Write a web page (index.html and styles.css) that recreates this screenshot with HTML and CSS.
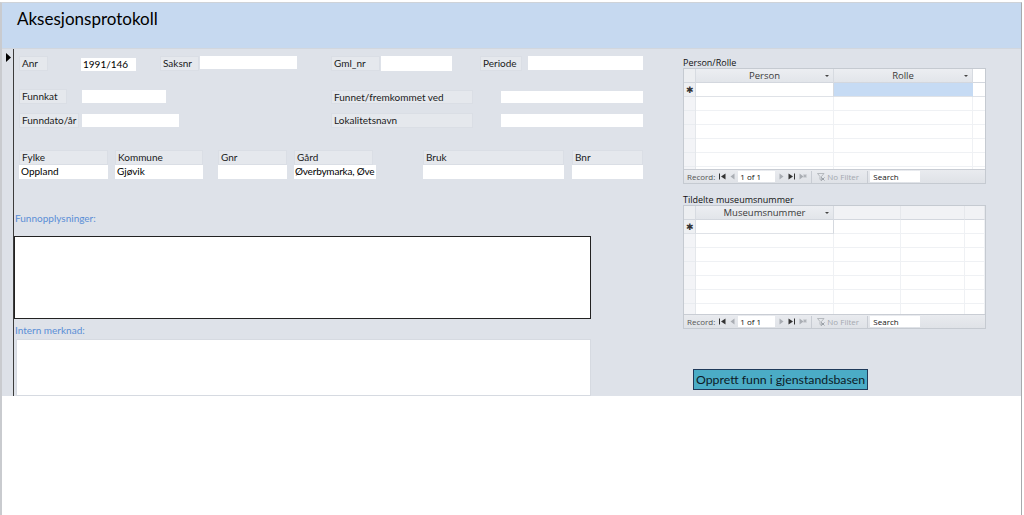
FILE: index.html
```html
<!DOCTYPE html>
<html lang="no">
<head>
<meta charset="utf-8">
<title>Aksesjonsprotokoll</title>
<link rel="stylesheet" href="styles.css">
</head>
<body>
<div class="frame">
  <header class="form-header">
    <h1 class="title">Aksesjonsprotokoll</h1>
  </header>
  <section class="detail">
    <div class="selector">
      <svg class="cur" width="5" height="9" viewBox="0 0 5 9"><path d="M0 0L5 4.5L0 9Z" fill="#000"/></svg>
    </div>
    <div class="left">
      <div class="row r1">
        <span class="lbl l-anr">Anr</span>
        <span class="inp i-anr">1991/146</span>
        <span class="lbl l-saks">Saksnr</span>
        <span class="inp i-saks"></span>
        <span class="lbl l-gml">Gml_nr</span>
        <span class="inp i-gml"></span>
        <span class="lbl l-per">Periode</span>
        <span class="inp i-per"></span>
      </div>
      <div class="row r2">
        <span class="lbl l-funnkat">Funnkat</span>
        <span class="inp i-funnkat"></span>
        <span class="lbl l-funnet">Funnet/fremkommet ved</span>
        <span class="inp i-funnet"></span>
      </div>
      <div class="row r3">
        <span class="lbl l-dato">Funndato/år</span>
        <span class="inp i-dato"></span>
        <span class="lbl l-lok">Lokalitetsnavn</span>
        <span class="inp i-lok"></span>
      </div>
      <div class="row r4">
        <div class="stack s-fylke"><span class="lbl">Fylke</span><span class="inp">Oppland</span></div>
        <div class="stack s-kommune"><span class="lbl">Kommune</span><span class="inp">Gjøvik</span></div>
        <div class="stack s-gnr"><span class="lbl">Gnr</span><span class="inp"></span></div>
        <div class="stack s-gard"><span class="lbl">Gård</span><span class="inp">Øverbymarka, Øve</span></div>
        <div class="stack s-bruk"><span class="lbl">Bruk</span><span class="inp"></span></div>
        <div class="stack s-bnr"><span class="lbl">Bnr</span><span class="inp"></span></div>
      </div>
      <div class="caption c-funn">Funnopplysninger:</div>
      <div class="memo memo1"></div>
      <div class="caption c-intern">Intern merknad:</div>
      <div class="memo memo2"></div>
    </div>
    <div class="right">
      <div class="sub-title t1">Person/Rolle</div>
      <div class="ds ds1">
        <div class="ds-grid g1">
          <div class="hd sel"></div>
          <div class="hd">Person<i class="arr"></i></div>
          <div class="hd">Rolle<i class="arr"></i></div>
          <div class="hd blank"></div>
          <div class="nr sel">✱</div>
          <div class="nr cell"></div>
          <div class="nr cell hi"></div>
          <div class="nr blank"></div>
          <div class="fill sel"></div>
          <div class="fill"></div>
          <div class="fill"></div>
          <div class="fill"></div>
        </div>
        <div class="nav">
          <span class="nav-rec">Record:</span>
          <svg class="nico" width="7" height="7" viewBox="0 0 7 7"><path d="M0.5 0.5V6.5" stroke="#333"/><path d="M6.5 0.5L2 3.5L6.5 6.5Z" fill="#333"/></svg>
          <svg class="nico" width="5" height="7" viewBox="0 0 5 7"><path d="M4.5 0.5L0.5 3.5L4.5 6.5Z" fill="#a9adb3"/></svg>
          <span class="nav-box">1 of 1</span>
          <svg class="nico" width="5" height="7" viewBox="0 0 5 7"><path d="M0.5 0.5L4.5 3.5L0.5 6.5Z" fill="#a9adb3"/></svg>
          <svg class="nico" width="7" height="7" viewBox="0 0 7 7"><path d="M0.5 0.5L5 3.5L0.5 6.5Z" fill="#333"/><path d="M6.5 0.5V6.5" stroke="#333"/></svg>
          <svg class="nico" width="8" height="7" viewBox="0 0 8 7"><path d="M0.5 0.5L4.5 3.5L0.5 6.5Z" fill="#a9adb3"/><path d="M6 1V5M4 3H8M4.6 1.6L7.4 4.4M7.4 1.6L4.6 4.4" stroke="#a9adb3" stroke-width="0.7"/></svg>
          <span class="nav-sep"></span>
          <span class="nav-filter"><svg width="8" height="8" viewBox="0 0 8 8"><path d="M0.5 0.5H7L4.5 3.5V7.5L3 6.5V3.5Z" fill="none" stroke="#a9adb3" stroke-width="0.8"/><path d="M4.5 4.5L7.5 7.5M7.5 4.5L4.5 7.5" stroke="#8a9098" stroke-width="0.8"/></svg>No Filter</span>
          <span class="nav-sep"></span>
          <span class="nav-search">Search</span>
        </div>
      </div>
      <div class="sub-title t2">Tildelte museumsnummer</div>
      <div class="ds ds2">
        <div class="ds-grid g2">
          <div class="hd sel"></div>
          <div class="hd">Museumsnummer<i class="arr"></i></div>
          <div class="hd blank"></div>
          <div class="hd blank"></div>
          <div class="hd blank"></div>
          <div class="nr sel">✱</div>
          <div class="nr cell"></div>
          <div class="fill"></div>
          <div class="fill"></div>
          <div class="fill"></div>
          <div class="fill sel"></div>
          <div class="fill"></div>
        </div>
        <div class="nav">
          <span class="nav-rec">Record:</span>
          <svg class="nico" width="7" height="7" viewBox="0 0 7 7"><path d="M0.5 0.5V6.5" stroke="#333"/><path d="M6.5 0.5L2 3.5L6.5 6.5Z" fill="#333"/></svg>
          <svg class="nico" width="5" height="7" viewBox="0 0 5 7"><path d="M4.5 0.5L0.5 3.5L4.5 6.5Z" fill="#a9adb3"/></svg>
          <span class="nav-box">1 of 1</span>
          <svg class="nico" width="5" height="7" viewBox="0 0 5 7"><path d="M0.5 0.5L4.5 3.5L0.5 6.5Z" fill="#a9adb3"/></svg>
          <svg class="nico" width="7" height="7" viewBox="0 0 7 7"><path d="M0.5 0.5L5 3.5L0.5 6.5Z" fill="#333"/><path d="M6.5 0.5V6.5" stroke="#333"/></svg>
          <svg class="nico" width="8" height="7" viewBox="0 0 8 7"><path d="M0.5 0.5L4.5 3.5L0.5 6.5Z" fill="#a9adb3"/><path d="M6 1V5M4 3H8M4.6 1.6L7.4 4.4M7.4 1.6L4.6 4.4" stroke="#a9adb3" stroke-width="0.7"/></svg>
          <span class="nav-sep"></span>
          <span class="nav-filter"><svg width="8" height="8" viewBox="0 0 8 8"><path d="M0.5 0.5H7L4.5 3.5V7.5L3 6.5V3.5Z" fill="none" stroke="#a9adb3" stroke-width="0.8"/><path d="M4.5 4.5L7.5 7.5M7.5 4.5L4.5 7.5" stroke="#8a9098" stroke-width="0.8"/></svg>No Filter</span>
          <span class="nav-sep"></span>
          <span class="nav-search">Search</span>
        </div>
      </div>
      <button class="action" type="button">Opprett funn i gjenstandsbasen</button>
    </div>
  </section>
</div>
</body>
</html>
```
FILE: styles.css
```css
* { box-sizing: border-box; }
html, body { margin: 0; padding: 0; background: #fff; }
body { font-family: "Lato", "Liberation Sans", sans-serif; color: #000; }

.frame {
  width: 1022px;
  height: 513px;
  margin-top: 2px;
  border-top: 1px solid #cfd3d8;
  border-left: 2px solid #c9cbcf;
  border-right: 1px solid #a7a9ad;
  background: #fff;
}

.form-header {
  height: 45px;
  background: #c6d9f0;
  padding: 5px 0 0 15px;
}
.title {
  margin: 0;
  font-weight: normal;
  font-size: 17px;
  line-height: 22px;
  color: #000;
}

.detail {
  height: 348px;
  background: #dee2e9;
  display: grid;
  grid-template-columns: 12px 669px 303px;
  border-top: 1px solid #d2d7de;
}

.selector {
  border-right: 1px solid #3c3c3c;
  background: #dde1e8;
  padding: 4px 0 0 4px;
}
.cur { display: block; }

.left { padding-top: 7px; }

.row { display: flex; align-items: flex-start; }
.lbl {
  display: block;
  height: 15px;
  background: #e5e8ed;
  border: 1px solid #dadee5;
  font-size: 10px;
  line-height: 13px;
  padding-left: 2px;
  white-space: nowrap;
  overflow: hidden;
  color: #1a1a1a;
}
.inp {
  display: block;
  height: 13px;
  background: #fff;
  font-size: 10px;
  line-height: 13px;
  padding-left: 2px;
  white-space: nowrap;
  overflow: hidden;
  color: #000;
}

.l-anr { margin-left: 5px; width: 29px; }
.i-anr { margin-left: 33px; width: 55px; margin-top: 2px; }
.l-saks { margin-left: 24px; width: 39px; }
.i-saks { margin-left: 1px; width: 97px; }
.l-gml { margin-left: 34px; width: 49px; }
.i-gml { margin-left: 1px; width: 71px; height: 15px; }
.l-per { margin-left: 28px; width: 42px; }
.i-per { margin-left: 6px; width: 115px; height: 14px; }

.r2 { margin-top: 18px; }
.l-funnkat { margin-left: 5px; width: 48px; }
.i-funnkat { margin-left: 15px; width: 84px; margin-top: 1px; }
.l-funnet { margin-left: 165px; width: 142px; margin-top: 1px; height: 14px; }
.i-funnet { margin-left: 28px; width: 142px; margin-top: 2px; height: 12px; }

.r3 { margin-top: 9px; }
.l-dato { margin-left: 5px; width: 60px; }
.i-dato { margin-left: 3px; width: 97px; margin-top: 1px; }
.l-lok { margin-left: 152px; width: 142px; }
.i-lok { margin-left: 28px; width: 142px; margin-top: 1px; }

.r4 { margin-top: 22px; }
.stack { display: flex; flex-direction: column; }
.stack .lbl { height: 15px; }
.stack .inp { height: 14px; }
.s-fylke { margin-left: 5px; width: 89px; }
.s-kommune { margin-left: 7px; width: 88px; }
.s-gnr { margin-left: 15px; width: 69px; }
.s-gard { margin-left: 7px; width: 82px; }
.s-gard .lbl { width: 79px; }
.s-gard .inp { padding-left: 1px; letter-spacing: -0.2px; }
.s-bruk { margin-left: 47px; width: 141px; }
.s-bnr { margin-left: 8px; width: 71px; }

.caption {
  font-size: 10px;
  line-height: 12px;
  color: #5a8ed6;
  padding-left: 1px;
}
.c-funn { margin-top: 33px; }
.memo1 {
  margin-top: 12px;
  width: 577px;
  height: 83px;
  background: #fff;
  border: 1px solid #222;
}
.c-intern { margin-top: 5px; }
.memo2 {
  margin-top: 3px;
  margin-left: 2px;
  width: 575px;
  height: 57px;
  background: #fff;
  border: 1px solid #d6dae1;
}

.right { padding-top: 8px; }
.sub-title {
  font-family: "Open Sans", "Liberation Sans", sans-serif;
  font-size: 9px;
  line-height: 11px;
  color: #111;
}
.t2 { margin-top: 10px; }

.ds {
  width: 303px;
  border: 1px solid #c5cad1;
  background: #fff;
  display: flex;
  flex-direction: column;
  font-family: "Open Sans", "Liberation Sans", sans-serif;
}
.ds1 { height: 116px; }
.ds2 { height: 124px; }

.ds-grid { flex: 1; display: grid; grid-template-rows: 14px 14px 1fr; }
.g1 { grid-template-columns: 12px 138px 139px 1fr; }
.g2 { grid-template-columns: 12px 138px 67px 64px 1fr; }
.g2 .nr.sel { grid-column: 1; grid-row: 2; }
.g2 .nr.cell { grid-column: 2; grid-row: 2; }
.g2 .fill:nth-of-type(8) { grid-column: 3; grid-row: 2 / 4; }
.g2 .fill:nth-of-type(9) { grid-column: 4; grid-row: 2 / 4; }
.g2 .fill:nth-of-type(10) { grid-column: 5; grid-row: 2 / 4; }
.g2 .fill.sel { grid-column: 1; grid-row: 3; }
.g2 .fill:nth-of-type(12) { grid-column: 2; grid-row: 3; }

.hd {
  position: relative;
  background: linear-gradient(#eceef2, #e2e5ea);
  border-right: 1px solid #d7dbe1;
  border-bottom: 1px solid #d3d7de;
  font-size: 9.5px;
  line-height: 13px;
  text-align: center;
  color: #3a3a3a;
}
.hd.blank { background: #f1f2f5; border-right: 1px solid #e6e8ec; }
.g1 .hd.blank { background: #fff; border-right: 0; }
.hd.sel { background: #eceef1; }
.arr {
  position: absolute;
  right: 4px;
  top: 6px;
  width: 0; height: 0;
  border-left: 2px solid transparent;
  border-right: 2px solid transparent;
  border-top: 2px solid #444;
}

.nr { border-bottom: 1px solid #dfe2e7; }
.nr.sel {
  background: #eef0f3;
  border-right: 1px solid #d7dbe1;
  font-size: 9px;
  line-height: 13px;
  text-align: center;
  color: #333;
}
.nr.cell { background: #fff; border-right: 1px solid #d5d9df; }
.nr.cell.hi { background: #c6dbf4; border-right: 1px solid #c6dbf4; }
.nr.blank { background: #fff; }

.fill {
  background: repeating-linear-gradient(to bottom, #fff 0 13px, #eff1f4 13px 14px);
  border-right: 1px solid #eff1f4;
}
.fill.sel {
  background: repeating-linear-gradient(to bottom, #f3f4f7 0 13px, #e9ecf0 13px 14px);
  border-right: 1px solid #e4e7eb;
}
.g1 .fill:last-child { border-right: 0; }

.nav {
  height: 14px;
  flex: none;
  background: linear-gradient(#e9ebef, #dfe2e7);
  border-top: 1px solid #c9cdd4;
  display: flex;
  align-items: center;
  font-size: 8px;
  color: #333;
  white-space: nowrap;
}
.nav-rec { margin-left: 3px; color: #555; }
.nico { display: block; margin-left: 4px; }
.nav-box {
  margin-left: 3px;
  width: 37px;
  height: 11px;
  background: #fff;
  padding-left: 2px;
  line-height: 11px;
  color: #111;
}
.nav-sep { width: 1px; height: 12px; background: #c8ccd3; margin-left: 4px; }
.nav-filter {
  display: flex;
  align-items: center;
  gap: 2px;
  margin-left: 5px;
  color: #a4a9b0;
  width: 46px;
}
.nav-search {
  margin-left: 2px;
  width: 50px;
  height: 11px;
  background: #fff;
  line-height: 11px;
  padding-left: 3px;
  color: #111;
}

.action {
  display: block;
  margin: 40px 0 0 10px;
  width: 175px;
  height: 21px;
  padding: 0 0 0 2px;
  background: #4bacc6;
  border: 1px solid #1f3a5a;
  font-family: "Lato", "Liberation Sans", sans-serif;
  font-size: 12.3px;
  line-height: 19px;
  white-space: nowrap;
  text-align: left;
  color: #0c1a26;
  cursor: pointer;
}
```
